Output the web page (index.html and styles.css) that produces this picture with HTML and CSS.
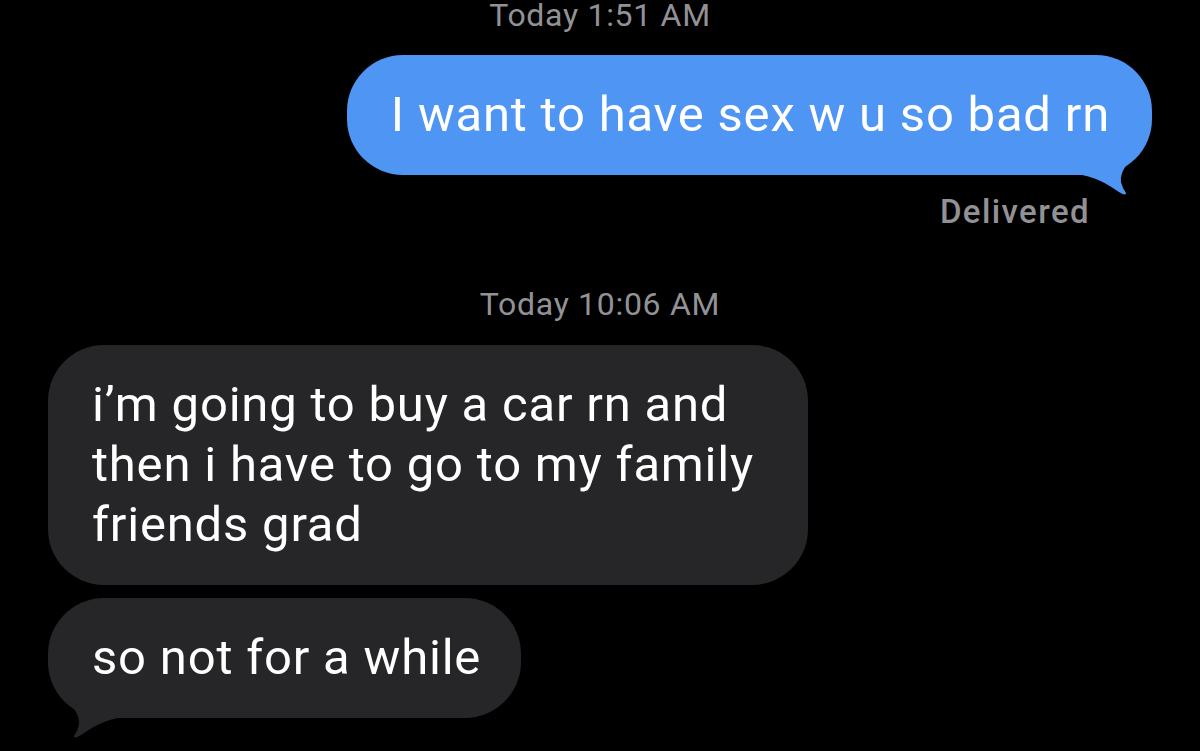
FILE: index.html
```html
<!DOCTYPE html>
<html>
<head>
<meta charset="utf-8">
<link rel="stylesheet" href="styles.css">
</head>
<body>
<div class="chat">
  <div class="stamp stamp-first">Today 1:51 AM</div>
  <div class="bubble sent">
    I want to have sex w u so bad rn
    <svg class="tail tail-right" viewBox="0 0 70 50" width="70" height="50"><path d="M0 0 L60 0 L56 8 C44 18 36 30 40 40 C41 44 43 46 44 48 C44.5 49.5 42 49.8 40 48.8 C30 43 18 33 0 30 Z"/></svg>
  </div>
  <div class="delivered">Delivered</div>
  <div class="stamp stamp-second">Today 10:06 AM</div>
  <div class="bubble received wide">i’m going to buy a car rn and<br>then i have to go to my family<br>friends grad</div>
  <div class="bubble received last">
    so not for a while
    <svg class="tail tail-left" viewBox="0 0 70 50" width="70" height="50"><path d="M0 0 L60 0 L56 8 C44 18 36 30 40 40 C41 44 43 46 44 48 C44.5 49.5 42 49.8 40 48.8 C30 43 18 33 0 30 Z"/></svg>
  </div>
</div>
</body>
</html>
```
FILE: styles.css
```css
html, body {
  margin: 0;
  padding: 0;
  background: #000;
  height: 100%;
  overflow: hidden;
}
.chat {
  display: flex;
  flex-direction: column;
  padding: 0 48px;
  font-family: Roboto, "Liberation Sans", sans-serif;
}
.stamp {
  align-self: center;
  color: #929296;
  font-size: 32px;
  letter-spacing: 0.7px;
  line-height: 30px;
}
.stamp-first {
  margin-top: 0;
}
.stamp-second {
  margin-top: 60px;
}
.bubble {
  position: relative;
  box-sizing: border-box;
  font-size: 49px;
  letter-spacing: 0.8px;
  line-height: 60px;
  color: #fff;
  border-radius: 56px;
  padding: 30px 42px 30px 44px;
}
.sent {
  align-self: flex-end;
  margin-top: 25px;
  background: #4f95f4;
  white-space: nowrap;
}
.received {
  align-self: flex-start;
  background: #262628;
}
.wide {
  width: 760px;
  margin-top: 26px;
}
.last {
  margin-top: 13px;
  padding-right: 40px;
}
.tail {
  position: absolute;
  bottom: -20px;
}
.tail-right {
  right: 0;
  fill: #4f95f4;
}
.tail-left {
  left: 0;
  fill: #262628;
  transform: scaleX(-1);
}
.delivered {
  align-self: flex-end;
  margin-right: 62px;
  margin-top: 20px;
  color: #929296;
  font-size: 33px;
  font-weight: 500;
  letter-spacing: 1.4px;
  line-height: 34px;
}
```
